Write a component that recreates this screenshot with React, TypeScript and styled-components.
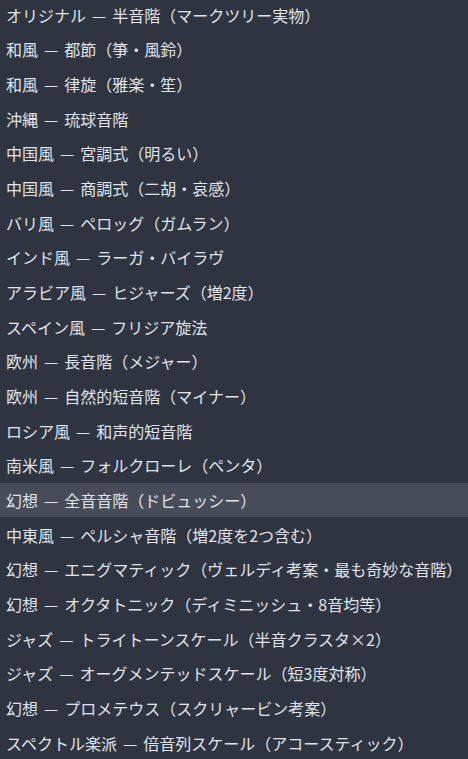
import React from "react";
import styled, { createGlobalStyle } from "styled-components";

const Global = createGlobalStyle`
  html, body { margin: 0; padding: 0; background: #2e3440; }
  body { overflow: hidden; }
`;

const List = styled.ul`
  list-style: none;
  margin: -2.6px 0 0 0;
  padding: 0;
  width: 468px;
  background: #2e3440;
  font-family: "Noto Sans CJK JP", "Noto Sans", sans-serif;
  font-size: 16px;
  color: #e0e4ea;
`;

const Item = styled.li<{ $active?: boolean }>`
  height: 34.67px;
  display: flex;
  align-items: center;
  gap: 6px;
  padding: 0 6px;
  white-space: nowrap;
  background: ${(p) => (p.$active ? "#474d58" : "transparent")};
`;

const Region = styled.span``;
const Sep = styled.span``;
const Name = styled.span``;

const items: [string, string][] = [
  ["オリジナル", "半音階（マークツリー実物）"],
  ["和風", "都節（箏・風鈴）"],
  ["和風", "律旋（雅楽・笙）"],
  ["沖縄", "琉球音階"],
  ["中国風", "宮調式（明るい）"],
  ["中国風", "商調式（二胡・哀感）"],
  ["バリ風", "ペロッグ（ガムラン）"],
  ["インド風", "ラーガ・バイラヴ"],
  ["アラビア風", "ヒジャーズ（増2度）"],
  ["スペイン風", "フリジア旋法"],
  ["欧州", "長音階（メジャー）"],
  ["欧州", "自然的短音階（マイナー）"],
  ["ロシア風", "和声的短音階"],
  ["南米風", "フォルクローレ（ペンタ）"],
  ["幻想", "全音音階（ドビュッシー）"],
  ["中東風", "ペルシャ音階（増2度を2つ含む）"],
  ["幻想", "エニグマティック（ヴェルディ考案・最も奇妙な音階）"],
  ["幻想", "オクタトニック（ディミニッシュ・8音均等）"],
  ["ジャズ", "トライトーンスケール（半音クラスタ×2）"],
  ["ジャズ", "オーグメンテッドスケール（短3度対称）"],
  ["幻想", "プロメテウス（スクリャービン考案）"],
  ["スペクトル楽派", "倍音列スケール（アコースティック）"],
];

export default function App() {
  return (
    <>
      <Global />
      <List>
        {items.map(([region, name], i) => (
          <Item key={i} $active={i === 14}>
            <Region>{region}</Region>
            <Sep>—</Sep>
            <Name>{name}</Name>
          </Item>
        ))}
      </List>
    </>
  );
}
